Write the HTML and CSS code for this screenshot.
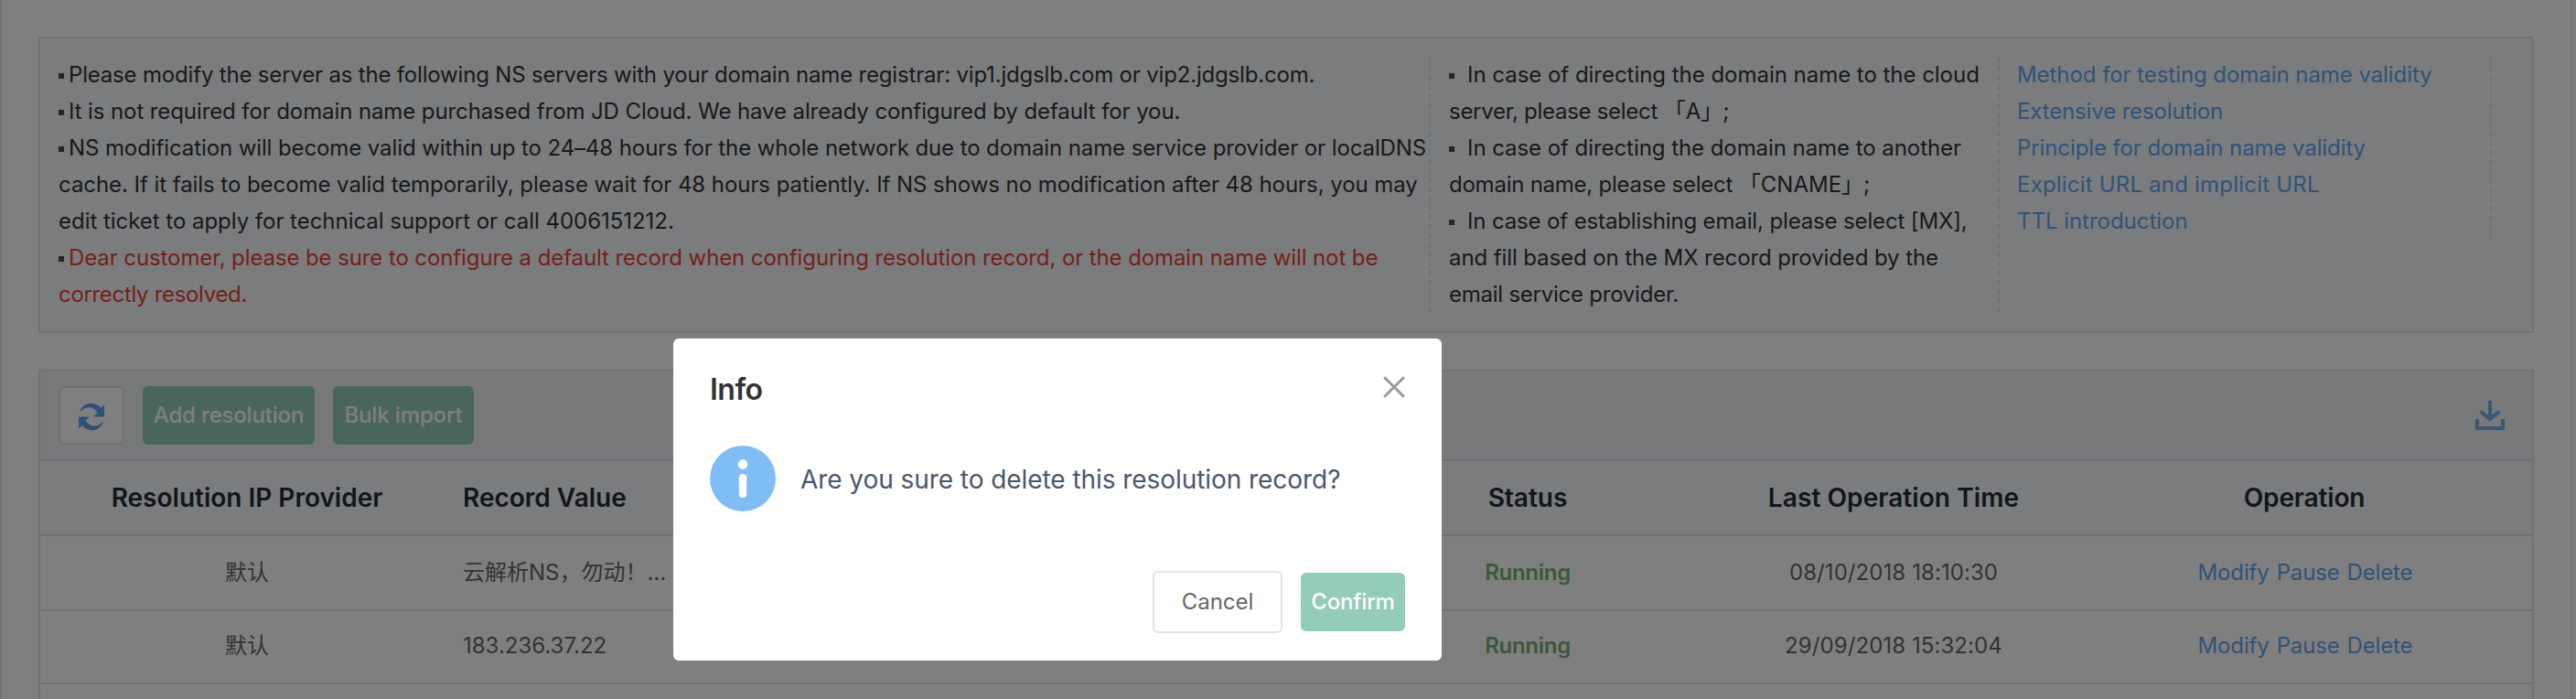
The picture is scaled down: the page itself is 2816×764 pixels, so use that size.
FILE: index.html
```html
<!DOCTYPE html>
<html lang="en">
<head>
<meta charset="utf-8">
<title>Domain resolution</title>
<link rel="stylesheet" href="styles.css">
</head>
<body>
<main class="page">
  <section class="notice">
    <div class="notice-col notice-main">
      <p class="ls-18 bullet">Please modify the server as the following NS servers with your domain name registrar: vip1.jdgslb.com or vip2.jdgslb.com.</p>
      <p class="ls-10 bullet">It is not required for domain name purchased from JD Cloud. We have already configured by default for you.</p>
      <p class="ls-10 bullet">NS modification will become valid within up to 24–48 hours for the whole network due to domain name service provider or localDNS</p>
      <p class="ls-06">cache. If it fails to become valid temporarily, please wait for 48 hours patiently. If NS shows no modification after 48 hours, you may</p>
      <p class="ls-03">edit ticket to apply for technical support or call 4006151212.</p>
      <p class="ls-10 bullet"><span class="warn">Dear customer, please be sure to configure a default record when configuring resolution record, or the domain name will not be</span></p>
      <p class="ls-30 warn">correctly resolved.</p>
    </div>
    <div class="notice-col notice-types">
      <p class="ls-03 bullet">In case of directing the domain name to the cloud</p>
      <p><span class="ls-28">server, please select</span> 「A」;</p>
      <p class="ls-06 bullet">In case of directing the domain name to another</p>
      <p><span class="ls-24">domain name, please select</span> 「CNAME」;</p>
      <p class="ls-14 bullet">In case of establishing email, please select [MX],</p>
      <p class="ls-10">and fill based on the MX record provided by the</p>
      <p class="ls-24">email service provider.</p>
    </div>
    <div class="notice-col notice-links">
      <a class="ls-06">Method for testing domain name validity</a>
      <a class="ls-14">Extensive resolution</a>
      <a class="ls-10">Principle for domain name validity</a>
      <a class="ls-plus20">Explicit URL and implicit URL</a>
      <a class="ls-03">TTL introduction</a>
    </div>
  </section>

  <section class="records">
    <div class="toolbar">
      <button class="btn btn-refresh" aria-label="Refresh">
        <svg class="icon-refresh" viewBox="138 122 84 92">
          <path d="M141 154C148 132 164 123 180 124C192 125 202 129 210 139L222 130V168H186L199 155C192 142 178 136 166 138C156 140 148 146 141 154Z"/>
          <path transform="rotate(180 180 168)" d="M141 154C148 132 164 123 180 124C192 125 202 129 210 139L222 130V168H186L199 155C192 142 178 136 166 138C156 140 148 146 141 154Z"/>
        </svg>
      </button>
      <button class="btn btn-green btn-add ls-18">Add resolution</button>
      <button class="btn btn-green btn-bulk ls-14">Bulk import</button>
      <svg class="icon-download" viewBox="0 0 32 32">
        <path class="tray" d="M0 20H4V28H28V20H32V32H0Z"/>
        <path class="arrow" d="M16 0V20M5.6 11.6L16 20L26.4 11.6"/>
      </svg>
    </div>
    <div class="row row-head">
      <div>Resolution IP Provider</div>
      <div class="value">Record Value</div>
      <div>Status</div>
      <div class="ls-plus10">Last Operation Time</div>
      <div class="ls-14">Operation</div>
    </div>
    <div class="row">
      <div>默认</div>
      <div class="value">云解析NS，勿动！…</div>
      <div class="running">Running</div>
      <div class="ls-plus10">08/10/2018 18:10:30</div>
      <div class="ops"><a>Modify</a><a>Pause</a><a>Delete</a></div>
    </div>
    <div class="row row-second">
      <div>默认</div>
      <div class="value">183.236.37.22</div>
      <div class="running">Running</div>
      <div class="ls-plus10">29/09/2018 15:32:04</div>
      <div class="ops"><a>Modify</a><a>Pause</a><a>Delete</a></div>
    </div>
  </section>
</main>

<div class="overlay">
  <div class="modal" role="dialog">
    <header class="modal-head">
      <h1>Info</h1>
      <svg class="icon-close" viewBox="0 0 24 24"><path d="M1.2 1.2L22.8 22.8M22.8 1.2L1.2 22.8"/></svg>
    </header>
    <div class="modal-body">
      <svg class="icon-info" viewBox="0 0 72 72">
        <circle class="disc" cx="36" cy="36" r="36"/>
        <circle class="mark" cx="36" cy="20.6" r="5.3"/>
        <rect class="mark" x="31.8" y="31" width="8.4" height="26" rx="4"/>
      </svg>
      <p class="ls-06">Are you sure to delete this resolution record?</p>
    </div>
    <footer class="modal-foot">
      <button class="btn btn-cancel">Cancel</button>
      <button class="btn btn-green btn-confirm ls-18">Confirm</button>
    </footer>
  </div>
</div>
</body>
</html>
```
FILE: styles.css
```css
* { box-sizing: border-box; }
body {
  margin: 0;
  height: 764px;
  overflow: hidden;
  background: #f6f7fa;
  font: 24px/40px Inter, "Noto Sans CJK SC", sans-serif;
  color: #333;
}
p, h1 { margin: 0; }
.page {
  width: 2812px;
  height: 764px;
  overflow: hidden;
  padding: 40px 40px 0;
  background: #fff;
  border-left: 2px solid #e2e4e8;
  border-right: 2px solid #e6e8ec;
}

.ls-03 { letter-spacing: -0.03px; }
.ls-06 { letter-spacing: -0.06px; }
.ls-10 { letter-spacing: -0.1px; }
.ls-14 { letter-spacing: -0.14px; }
.ls-18 { letter-spacing: -0.18px; }
.ls-24 { letter-spacing: -0.24px; }
.ls-28 { letter-spacing: -0.28px; }
.ls-30 { letter-spacing: -0.32px; }
.ls-plus10 { letter-spacing: 0.08px; }
.ls-plus20 { letter-spacing: 0.2px; }

.notice {
  display: flex;
  align-items: flex-start;
  width: 2728px;
  height: 324px;
  padding: 20px;
  background: #f6f8fa;
  border: 2px solid #dfe3e8;
}
.notice-col {
  white-space: nowrap;
  border-right: 2px dashed #e2e5e8;
}
.notice-main { width: 1500px; }
.notice-types { width: 622px; padding-left: 20px; }
.notice-links { width: 538px; padding-left: 19px; }
.notice-links a { display: block; }
.bullet::before {
  content: "";
  display: inline-block;
  width: 6px;
  height: 6px;
  margin-right: 5px;
  vertical-align: 4px;
  background: #4c4c4c;
}
.notice-types .bullet::before { margin-right: 14px; }
.warn { color: #ea4030; }
a { color: #5fa6f2; }

.records {
  width: 2728px;
  height: 400px;
  margin-top: 40px;
  border: 2px solid #dfe3e8;
}
.toolbar {
  display: flex;
  align-items: center;
  height: 98px;
  padding: 0 30px 0 20px;
  background: #f0f3f5;
  border-bottom: 2px solid #dfe3e8;
}
.btn {
  display: flex;
  align-items: center;
  justify-content: center;
  height: 64px;
  padding: 0;
  font-family: inherit;
  font-size: 24px;
  line-height: 40px;
  border: 0;
  border-radius: 6px;
}
.btn-green { font-weight: 500; color: #fff; background: #93cdb8; }
.btn-refresh { width: 72px; background: #fff; border: 2px solid #e0e3e7; }
.btn-add { width: 188px; margin-left: 20px; }
.btn-bulk { width: 154px; margin-left: 20px; }
.icon-refresh { width: 28px; height: 31px; margin-top: 3px; fill: #5fa3f0; }
.icon-download { width: 32px; height: 32px; margin-left: auto; }
.icon-download .tray { fill: #72b0e6; }
.icon-download .arrow { fill: none; stroke: #72b0e6; stroke-width: 4; }

.row {
  display: grid;
  grid-template-columns: 452px 974px 400px 400px 498px;
  align-items: center;
  height: 82px;
  text-align: center;
  white-space: nowrap;
  color: #666;
  border-bottom: 2px solid #dfe1ea;
}
.row .value { padding-left: 10px; text-align: left; }
.row-head {
  font-size: 28px;
  font-weight: 600;
  color: #222d38;
  background: #f7f8fa;
}
.row-second { height: 80px; padding-bottom: 2px; }
.running { font-weight: 600; letter-spacing: -0.28px; color: #6fb56f; }
.ops { display: flex; justify-content: center; gap: 8px; padding-left: 2px; letter-spacing: -0.15px; }

.overlay {
  position: absolute;
  inset: 0;
  background: rgba(0, 0, 0, 0.5);
}
.modal {
  position: absolute;
  left: 736px;
  top: 370px;
  width: 840px;
  height: 352px;
  padding: 30px 40px;
  background: #fff;
  border-radius: 6px;
}
.modal-head {
  display: flex;
  align-items: center;
  justify-content: space-between;
  height: 48px;
}
.modal-head h1 { padding-top: 3px; font-size: 32px; font-weight: 600; letter-spacing: -0.5px; }
.icon-close { width: 24px; height: 24px; margin-bottom: 2px; fill: none; stroke: #999; stroke-width: 3; }
.modal-body {
  display: flex;
  align-items: center;
  gap: 27px;
  margin-top: 39px;
  font-size: 28px;
  color: #4c576b;
}
.modal-body p { padding-top: 2px; }
.icon-info { width: 72px; height: 72px; }
.icon-info .disc { fill: #80bdf5; }
.icon-info .mark { fill: #fff; }
.modal-foot {
  display: flex;
  align-items: center;
  justify-content: flex-end;
  gap: 20px;
  margin-top: 65px;
}
.btn-cancel { width: 142px; height: 68px; color: #666; background: #fff; border: 2px solid #e1e4e7; }
.btn-confirm { width: 114px; }
```
